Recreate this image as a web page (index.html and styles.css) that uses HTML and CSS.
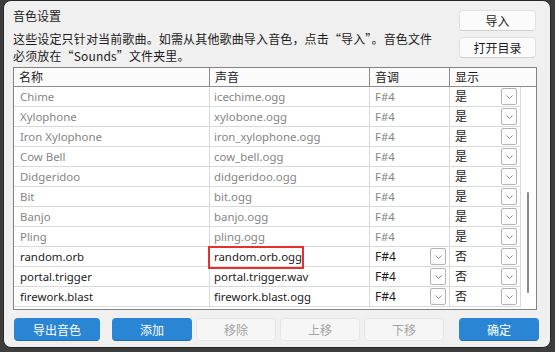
FILE: index.html
```html
<!DOCTYPE html>
<html>
  <head>
    <meta charset="utf-8">
    <title>音色设置</title>
    <link rel="stylesheet" href="styles.css">
  </head>
  <body>
    <div class="dialog">
      <div class="top">
        <div class="intro">
          <div class="title">音色设置</div>
          <p class="desc">这些设定只针对当前歌曲。如需从其他歌曲导入音色，点击“导入”。音色文件<br>必须放在“Sounds”文件夹里。</p>
        </div>
        <div class="side">
          <button class="btn">导入</button>
          <button class="btn">打开目录</button>
        </div>
      </div>

      <div class="list">
        <div class="head">
          <div class="hcell">名称</div>
          <div class="hcell">声音</div>
          <div class="hcell">音调</div>
          <div class="hcell">显示</div>
        </div>
        <div class="body">
          <div class="rows">
            <div class="row off">
              <div class="cell">Chime</div>
              <div class="cell">icechime.ogg</div>
              <div class="cell">F#4</div>
              <div class="cell pick">是<span class="drop"><svg width="7" height="4" viewBox="0 0 7 4"><polyline points="0.5,0.5 3.5,3.5 6.5,0.5"/></svg></span></div>
            </div>
            <div class="row off">
              <div class="cell">Xylophone</div>
              <div class="cell">xylobone.ogg</div>
              <div class="cell">F#4</div>
              <div class="cell pick">是<span class="drop"><svg width="7" height="4" viewBox="0 0 7 4"><polyline points="0.5,0.5 3.5,3.5 6.5,0.5"/></svg></span></div>
            </div>
            <div class="row off">
              <div class="cell">Iron Xylophone</div>
              <div class="cell">iron_xylophone.ogg</div>
              <div class="cell">F#4</div>
              <div class="cell pick">是<span class="drop"><svg width="7" height="4" viewBox="0 0 7 4"><polyline points="0.5,0.5 3.5,3.5 6.5,0.5"/></svg></span></div>
            </div>
            <div class="row off">
              <div class="cell">Cow Bell</div>
              <div class="cell">cow_bell.ogg</div>
              <div class="cell">F#4</div>
              <div class="cell pick">是<span class="drop"><svg width="7" height="4" viewBox="0 0 7 4"><polyline points="0.5,0.5 3.5,3.5 6.5,0.5"/></svg></span></div>
            </div>
            <div class="row off">
              <div class="cell">Didgeridoo</div>
              <div class="cell">didgeridoo.ogg</div>
              <div class="cell">F#4</div>
              <div class="cell pick">是<span class="drop"><svg width="7" height="4" viewBox="0 0 7 4"><polyline points="0.5,0.5 3.5,3.5 6.5,0.5"/></svg></span></div>
            </div>
            <div class="row off">
              <div class="cell">Bit</div>
              <div class="cell">bit.ogg</div>
              <div class="cell">F#4</div>
              <div class="cell pick">是<span class="drop"><svg width="7" height="4" viewBox="0 0 7 4"><polyline points="0.5,0.5 3.5,3.5 6.5,0.5"/></svg></span></div>
            </div>
            <div class="row off">
              <div class="cell">Banjo</div>
              <div class="cell">banjo.ogg</div>
              <div class="cell">F#4</div>
              <div class="cell pick">是<span class="drop"><svg width="7" height="4" viewBox="0 0 7 4"><polyline points="0.5,0.5 3.5,3.5 6.5,0.5"/></svg></span></div>
            </div>
            <div class="row off">
              <div class="cell">Pling</div>
              <div class="cell">pling.ogg</div>
              <div class="cell">F#4</div>
              <div class="cell pick">是<span class="drop"><svg width="7" height="4" viewBox="0 0 7 4"><polyline points="0.5,0.5 3.5,3.5 6.5,0.5"/></svg></span></div>
            </div>
            <div class="row">
              <div class="cell">random.orb</div>
              <div class="cell marked">random.orb.ogg<span class="mark"></span></div>
              <div class="cell pick">F#4<span class="drop"><svg width="7" height="4" viewBox="0 0 7 4"><polyline points="0.5,0.5 3.5,3.5 6.5,0.5"/></svg></span></div>
              <div class="cell pick">否<span class="drop"><svg width="7" height="4" viewBox="0 0 7 4"><polyline points="0.5,0.5 3.5,3.5 6.5,0.5"/></svg></span></div>
            </div>
            <div class="row">
              <div class="cell">portal.trigger</div>
              <div class="cell">portal.trigger.wav</div>
              <div class="cell pick">F#4<span class="drop"><svg width="7" height="4" viewBox="0 0 7 4"><polyline points="0.5,0.5 3.5,3.5 6.5,0.5"/></svg></span></div>
              <div class="cell pick">否<span class="drop"><svg width="7" height="4" viewBox="0 0 7 4"><polyline points="0.5,0.5 3.5,3.5 6.5,0.5"/></svg></span></div>
            </div>
            <div class="row">
              <div class="cell">firework.blast</div>
              <div class="cell">firework.blast.ogg</div>
              <div class="cell pick">F#4<span class="drop"><svg width="7" height="4" viewBox="0 0 7 4"><polyline points="0.5,0.5 3.5,3.5 6.5,0.5"/></svg></span></div>
              <div class="cell pick">否<span class="drop"><svg width="7" height="4" viewBox="0 0 7 4"><polyline points="0.5,0.5 3.5,3.5 6.5,0.5"/></svg></span></div>
            </div>
          </div>
          <div class="scroll"><div class="thumb"></div></div>
        </div>
      </div>

      <div class="actions">
        <button class="btn primary wide">导出音色</button>
        <button class="btn primary">添加</button>
        <button class="btn" disabled>移除</button>
        <button class="btn" disabled>上移</button>
        <button class="btn" disabled>下移</button>
        <button class="btn primary ok">确定</button>
      </div>
    </div>
  </body>
</html>
```

FILE: styles.css
```css
body {
  margin: 0;
  background: #3c3c3c;
  font-family: "Noto Sans", "Noto Sans CJK SC", sans-serif;
  font-size: 12px;
  color: #1b1b1b;
}

.dialog {
  box-sizing: border-box;
  width: 548px;
  height: 348px;
  margin-left: 3px;
  padding: 7px 13px 0 9px;
  background: #f0f0f0;
  border: 1px solid #262626;
  border-radius: 8px;
  display: flex;
  flex-direction: column;
}

.top {
  display: flex;
  justify-content: space-between;
}

.title {
  line-height: 16px;
  font-family: "Noto Sans CJK SC", sans-serif;
}

.desc {
  margin: 6px 0 0;
  line-height: 17px;
  font-family: "Noto Sans CJK SC", sans-serif;
  letter-spacing: 0.15px;
}

.side {
  display: flex;
  flex-direction: column;
  gap: 6px;
  margin-top: 2px;
  margin-right: 1px;
}

.btn {
  box-sizing: border-box;
  width: 77px;
  height: 21px;
  padding: 0;
  font-family: "Noto Sans CJK SC", sans-serif;
  font-size: 12px;
  color: #1b1b1b;
  background: #fbfbfb;
  border: 1px solid #e2e2e2;
  border-bottom-color: #cfcfcf;
  border-radius: 4px;
}

/* table */
.list {
  box-sizing: border-box;
  width: 524px;
  height: 243px;
  margin-top: 3px;
  background: #fff;
  border: 1px solid #838383;
}

.head {
  display: grid;
  grid-template-columns: 196px 160px 80px 1fr;
  background: #fbfbfb;
  border-bottom: 1px solid #8c8c8c;
}

.hcell {
  padding-left: 5px;
  line-height: 18px;
  border-right: 1px solid #8c8c8c;
  font-family: "Noto Sans CJK SC", sans-serif;
}

.hcell:last-child {
  border-right: none;
}

.body {
  display: flex;
}

.rows {
  width: 507px;
}

.row {
  display: grid;
  grid-template-columns: 196px 160px 80px 71px;
  border-bottom: 1px solid #d9d9d9;
}

.cell {
  box-sizing: border-box;
  height: 19px;
  padding-left: 5px;
  line-height: 19px;
  font-size: 11.4px;
  border-right: 1px solid #d9d9d9;
  white-space: nowrap;
}

.row .cell:first-child {
  padding-left: 6px;
}

.row .cell:nth-child(2) {
  padding-left: 4px;
}

.off .cell {
  color: #858585;
}

.off .cell:last-child {
  color: #1b1b1b;
}

.pick {
  display: flex;
  align-items: center;
  justify-content: space-between;
  padding-right: 3px;
  font-size: 12px;
}

.drop {
  box-sizing: border-box;
  width: 16px;
  height: 17px;
  display: flex;
  align-items: center;
  justify-content: center;
  background: #fdfdfd;
  border: 1px solid #b4b4b4;
  border-radius: 2px;
}

.drop svg polyline {
  fill: none;
  stroke: #8a8a8a;
  stroke-width: 1;
}

.marked {
  position: relative;
}

.mark {
  position: absolute;
  left: -2px;
  top: -1px;
  width: 96px;
  height: 23px;
  box-sizing: border-box;
  border: 2px solid #e8302b;
}

.scroll {
  position: relative;
  width: 15px;
}

.thumb {
  position: absolute;
  left: 6px;
  top: 105px;
  width: 2px;
  height: 101px;
  background: #8a8a8a;
  border-radius: 1px;
}

/* bottom buttons */
.actions {
  display: flex;
  gap: 4px;
  margin-top: 8px;
  margin-left: 1px;
}

.actions .btn {
  width: 80px;
  height: 23px;
  border-radius: 4px;
}

.actions .btn:disabled {
  color: #a3a3a3;
  background: #f6f6f6;
  border-color: #e6e6e6;
}

.btn.primary {
  color: #fff;
  background: #2a86d4;
  border-color: #2a86d4;
  border-bottom-color: #1d6db2;
}

.btn.wide {
  width: 86px;
  margin-right: 8px;
}

.btn.ok {
  margin-left: auto;
  margin-right: -2px;
}
```
